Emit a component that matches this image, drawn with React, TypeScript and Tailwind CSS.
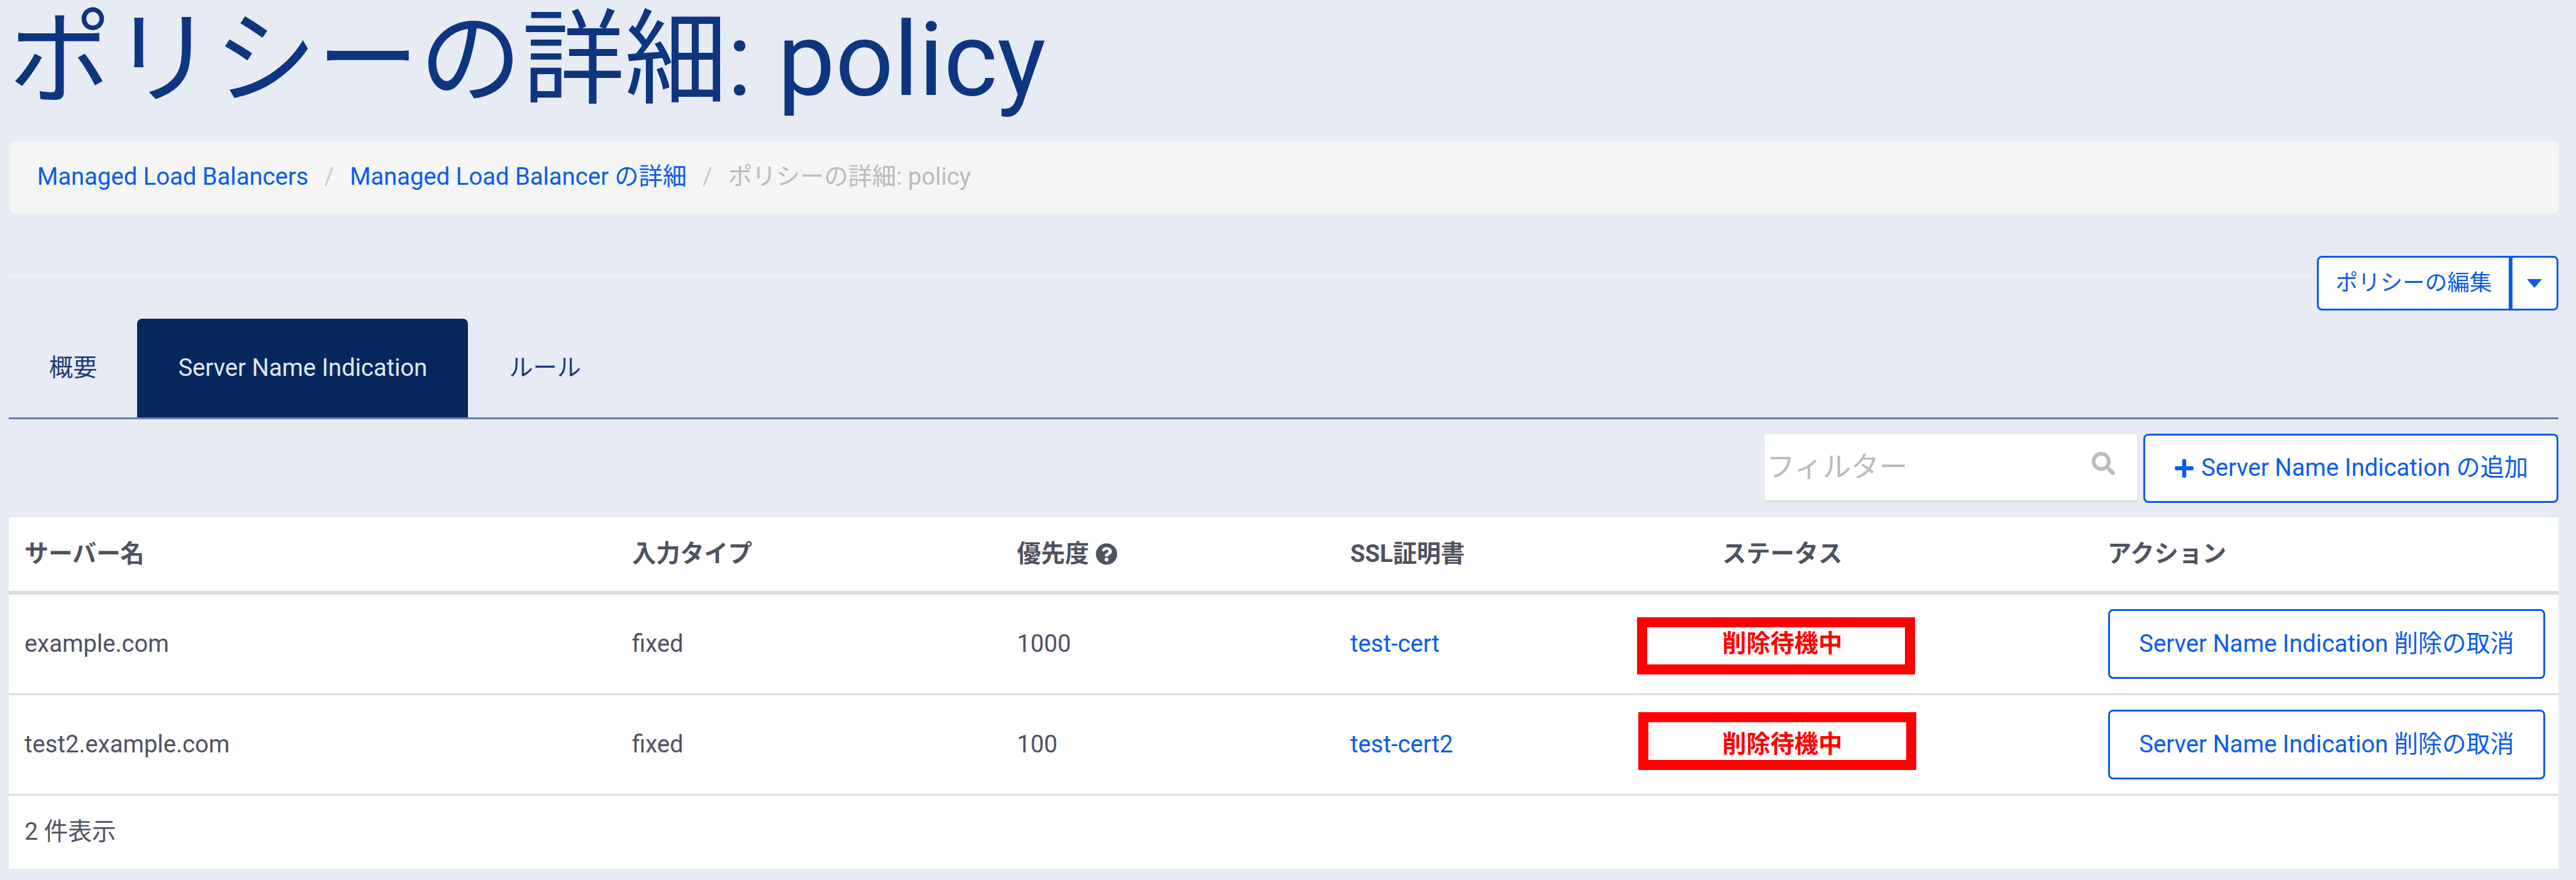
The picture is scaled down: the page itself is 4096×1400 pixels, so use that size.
import { FaPlus, FaQuestionCircle, FaSearch } from "react-icons/fa";

const columns = "grid grid-cols-[966px_612px_530px_220px_984px_742px] items-center";

const rows = [
  {
    name: "example.com",
    type: "fixed",
    priority: "1000",
    cert: "test-cert",
    mark: "left-[261px] top-[36px] w-[442px] h-[91px]",
  },
  {
    name: "test2.example.com",
    type: "fixed",
    priority: "100",
    cert: "test-cert2",
    mark: "left-[263px] top-[27px] w-[442px] h-[92px]",
  },
];

function OutlineButton({ className, children }: { className: string; children: React.ReactNode }) {
  return (
    <button className={"flex items-center justify-center bg-white border-[3px] border-[#0a5ce8] rounded-[8px] text-[#0a5ce8] " + className}>
      {children}
    </button>
  );
}

export default function App() {
  return (
    <div className="w-[4096px] h-[1400px] overflow-hidden bg-[#e7ebf4] pl-[14px] pr-[28px] font-['Roboto','Noto_Sans_CJK_JP',sans-serif] text-[38.2px] text-[#4f5260]">
      {/* Title */}
      <h1 className="h-[224px] pt-[10px] text-[163.2px] leading-[172px] font-normal text-[#0e3580] whitespace-nowrap">
        ポリシーの詳細: policy
      </h1>

      {/* Breadcrumb */}
      <nav className="h-[116px] ml-[2px] px-[43px] flex items-center bg-[#f5f5f5] rounded-[8px] whitespace-nowrap">
        <a className="text-[#0a5ce8]">Managed Load Balancers</a>
        <span className="px-[25px] text-[#cccccc]">/</span>
        <a className="text-[#0a5ce8]">Managed Load Balancer の詳細</a>
        <span className="px-[25px] text-[#cccccc]">/</span>
        <span className="text-[#bbbbbb]">ポリシーの詳細: policy</span>
      </nav>

      {/* Edit actions */}
      <div className="mt-[67px] h-[87px] flex items-start">
        <div className="flex-1 mt-[31px] h-[3px] bg-[#eeeff0]" />
        <div className="flex h-[87px]">
          <OutlineButton className="w-[308px] h-[87px] text-[35.5px] rounded-r-none border-r-[3px]">ポリシーの編集</OutlineButton>
          <OutlineButton className="w-[76px] h-[87px] rounded-l-none border-l-[3px]">
            <span className="w-0 h-0 border-x-[12px] border-x-transparent border-t-[14px] border-t-[#0a5ce8]" />
          </OutlineButton>
        </div>
      </div>

      {/* Tabs */}
      <div className="mt-[13px] h-[160px] flex items-stretch border-b-[3px] border-[#5f7cb8] text-[#1f3a75]">
        <div className="px-[64px] flex items-center">概要</div>
        <div className="px-[65px] flex items-center bg-[#08275f] text-[#e3e7f0] rounded-t-[8px]">Server Name Indication</div>
        <div className="px-[65px] flex items-center">ルール</div>
      </div>

      {/* Filter and add */}
      <div className="mt-[23px] h-[110px] flex justify-end">
        <div className="w-[592px] h-[108px] mt-[1px] bg-white border-b-[3px] border-[#dddddd] flex items-center justify-between pl-[3px] pr-[35px]">
          <span className="text-[45px] text-[#bbbbbb]">フィルター</span>
          <FaSearch className="text-[#bbbbbb] w-[37px] h-[37px] -mt-[12px]" />
        </div>
        <OutlineButton className="ml-[10px] w-[660px] h-[110px] gap-[10px]">
          <FaPlus className="w-[34px] h-[34px]" />
          <span>Server Name Indication の追加</span>
        </OutlineButton>
      </div>

      {/* Table */}
      <div className="mt-[23px] bg-white h-[559px]">
        <div className={columns + " h-[123px] border-b-[6px] border-[#dddddd] font-bold"}>
          <div className="pl-[25px]">サーバー名</div>
          <div className="pl-[25px]">入力タイプ</div>
          <div className="pl-[25px] flex items-center gap-[10px]">
            優先度 <FaQuestionCircle className="w-[35px] h-[35px]" />
          </div>
          <div className="pl-[25px] whitespace-nowrap">SSL証明書</div>
          <div className="text-center">ステータス</div>
          <div className="pl-[25px]">アクション</div>
        </div>
        {rows.map((row) => (
          <div key={row.name} className={columns + " h-[160px] border-b-[3px] border-[#dddddd]"}>
            <div className="pl-[25px]">{row.name}</div>
            <div className="pl-[25px]">{row.type}</div>
            <div className="pl-[25px]">{row.priority}</div>
            <div className="pl-[25px] text-[#0a5ce8]">{row.cert}</div>
            <div className="relative h-full flex items-center justify-center font-bold text-[#ff0000]">
              削除待機中
              {/* red annotation drawn over the status */}
              <div className={"absolute border-[16px] border-[#ff0000] " + row.mark} />
            </div>
            <div className="pl-[26px]">
              <OutlineButton className="w-[695px] h-[111px]">Server Name Indication 削除の取消</OutlineButton>
            </div>
          </div>
        ))}
        <div className="h-[116px] pl-[25px] flex items-center">2 件表示</div>
      </div>
    </div>
  );
}
